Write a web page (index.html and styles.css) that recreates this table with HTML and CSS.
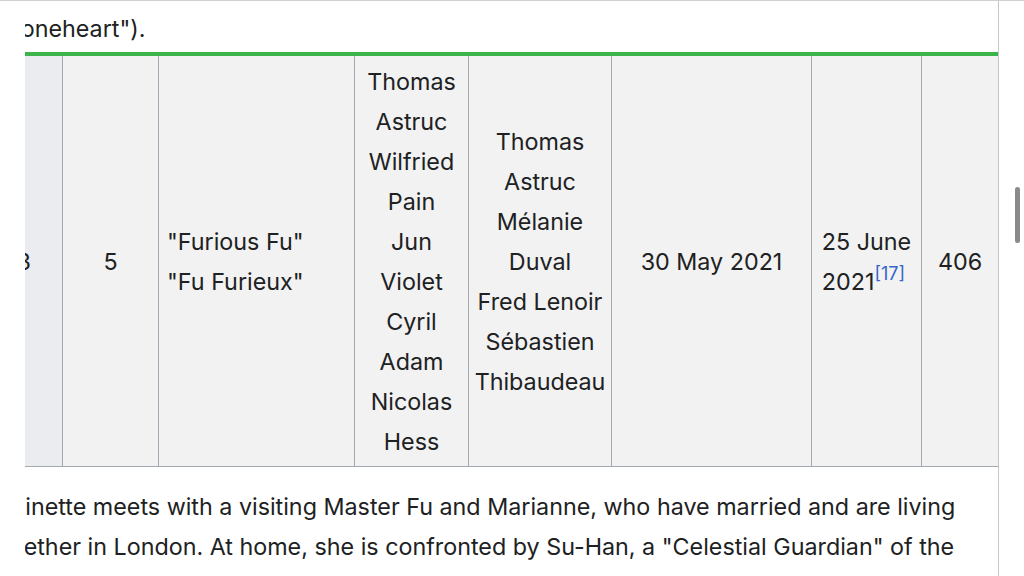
FILE: index.html
```html
<!DOCTYPE html>
<html lang="en">
<head>
<meta charset="utf-8">
<title>Furious Fu</title>
<link rel="stylesheet" href="styles.css">
</head>
<body>
<div class="screen">
  <main class="viewport">
    <p class="intro">("Stoneheart").</p>
    <div class="episode" role="table">
      <div class="cell cell-head"><div class="cell-text">83</div></div>
      <div class="cell"><div class="cell-text">5</div></div>
      <div class="cell cell-title"><div class="cell-text">"Furious Fu"<br>"Fu Furieux"</div></div>
      <div class="cell"><div class="cell-text">Thomas<br>Astruc<br>Wilfried<br>Pain<br>Jun<br>Violet<br>Cyril<br>Adam<br>Nicolas<br>Hess</div></div>
      <div class="cell"><div class="cell-text">Thomas<br>Astruc<br>Mélanie<br>Duval<br>Fred Lenoir<br>Sébastien<br>Thibaudeau</div></div>
      <div class="cell"><div class="cell-text">30 May 2021</div></div>
      <div class="cell"><div class="cell-text cell-date">25 June<br>2021<sup class="ref">[17]</sup></div></div>
      <div class="cell"><div class="cell-text">406</div></div>
    </div>
    <p class="summary">Marinette meets with a visiting Master Fu and Marianne, who have married and are living<br>together in London. At home, she is confronted by Su-Han, a "Celestial Guardian" of the<br>Order of the Guardians, who has come from China to reclaim the Miracle Box and its kwamis.</p>
  </main>
  <div class="scrollbar"><div class="thumb"></div></div>
</div>
</body>
</html>
```
FILE: styles.css
```css
* { box-sizing: border-box; }
html, body { margin: 0; padding: 0; background: #fff; }
body {
  font-family: Inter, "Noto Sans", "Liberation Sans", sans-serif;
  font-size: 23.3px;
  line-height: 40px;
  color: #202122;
  overflow: hidden;
}
.screen {
  display: flex;
  height: 576px;
  border-top: 1px solid #cfcfcf;
}
.viewport {
  margin-left: 25px;
  width: 974px;
  flex: none;
  overflow: hidden;
  border-right: 1px solid #c6c6c6;
}
.intro {
  margin: 8px 0 3px -46px;
  white-space: nowrap;
}
.episode {
  margin-left: -54px;
  display: grid;
  grid-template-columns: 92px 96px 196px 114px 143px 200px 110px 76px;
  background: #f2f2f2;
  border-top: 4px solid #3cb44b;
  border-bottom: 1px solid #a2a9b1;
  width: 1027px;
}
.cell {
  display: flex;
  align-items: center;
  justify-content: center;
  text-align: center;
  padding: 6px 2px 4px;
  min-height: 410px;
  border-right: 1px solid #a2a9b1;
  white-space: nowrap;
}
.cell:last-child { border-right: none; }
.cell-head { background: #eaecf0; }
.cell-title {
  justify-content: flex-start;
  text-align: left;
  padding-left: 8px;
}
.cell-date { text-align: left; }
.ref {
  font-size: 18px;
  line-height: 1;
  color: #3366cc;
  vertical-align: 10px;
}
.summary {
  margin: 20px 0 0 -37px;
  text-indent: -6px;
  white-space: nowrap;
}
.scrollbar {
  flex: 1;
  position: relative;
}
.thumb {
  position: absolute;
  left: 16px;
  top: 186px;
  width: 5px;
  height: 56px;
  border-radius: 3px;
  background: #8a8a8a;
}
```
